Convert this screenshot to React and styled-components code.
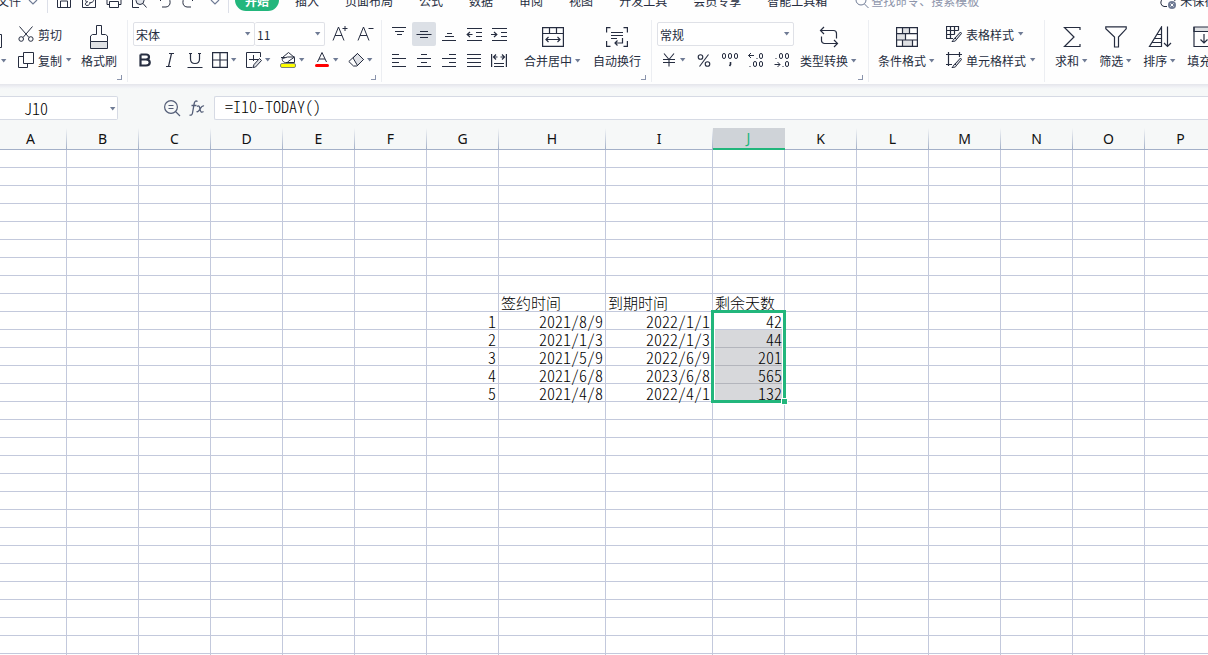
import React from "react";
import styled, { createGlobalStyle, css } from "styled-components";

const ink = "#262d40";
const muted = "#6f7b95";
const line = "#c3c9dc";
const headLine = "#a3b0c8";
const green = "#22b67c";
const uiFont = '"Noto Sans CJK SC", "Liberation Sans", sans-serif';

const Global = createGlobalStyle`
  *, *::before, *::after { box-sizing: border-box; }
  body { margin: 0; overflow: hidden; background: #fff; font-family: ${uiFont}; font-size: 12px; color: ${ink}; }
  button, input, select { font: inherit; color: inherit; margin: 0; }
`;

const Page = styled.div`
  display: flex;
  flex-direction: column;
  height: 100vh;
  overflow: hidden;
`;

const buttonReset = css`
  display: flex;
  align-items: center;
  flex-shrink: 0;
  border: 0;
  padding: 0;
  background: none;
  white-space: nowrap;
  cursor: pointer;
`;

/* Menu bar */
const MenuBar = styled.header`
  display: flex;
  align-items: center;
  flex-shrink: 0;
  height: 28px;
  margin-top: -14px;
  background: #fefefe;
`;
const FileButton = styled.button`
  ${buttonReset}
  gap: 7px;
  margin-left: -3px;
  padding-right: 9px;
`;
const Quick = styled.div`
  display: flex;
  align-items: center;
  gap: 9px;
  padding: 0 8px;
  border: solid #dcdfe8;
  border-width: 0 1px;
  height: 26px;
`;
const QuickButton = styled.button`
  ${buttonReset}
  padding-left: ${(p) => (p.$spaced ? 4 : 0)}px;
`;
const Tabs = styled.nav`
  display: flex;
  align-items: center;
  padding-left: 3px;
`;
const Tab = styled.button`
  ${buttonReset}
  height: 22px;
  padding: 0 13px;
  ${(p) => p.$active && css`
    padding: 0 10px;
    margin: 0 3px;
    border-radius: 11px;
    background: ${green};
    color: #fff;
    font-weight: 700;
  `}
`;
const Search = styled.label`
  display: flex;
  align-items: center;
  flex-shrink: 0;
  gap: 2px;
  margin-left: 15px;
  color: #7d86a0;
  input {
    width: 120px;
    border: 0;
    padding: 0;
    outline: 0;
    background: none;
  }
  input::placeholder { color: #8d94aa; opacity: 1; }
`;
const SaveState = styled.button`
  ${buttonReset}
  gap: 3px;
  margin-left: 168px;
`;

/* Ribbon */
const Ribbon = styled.section`
  display: flex;
  flex-shrink: 0;
  height: 70px;
  padding: 6px 0 2px;
  background: #fefefe;
`;
const Group = styled.div`
  position: relative;
  display: flex;
  align-items: flex-start;
  flex-shrink: 0;
  gap: ${(p) => p.$gap ?? 0}px;
  padding: 2px ${(p) => p.$right ?? 6}px 0 ${(p) => p.$left ?? 5}px;
  border-right: 1px solid #eceef2;
`;
const Launcher = styled.button`
  position: absolute;
  right: 5px;
  bottom: 2px;
  width: 5px;
  height: 5px;
  padding: 0;
  border: solid #8a94ac;
  border-width: 0 1px 1px 0;
  background: none;
`;
const Stack = styled.div`
  display: flex;
  flex-direction: column;
  gap: 2px;
  padding-right: ${(p) => p.$right ?? 0}px;
`;
const Row = styled.div`
  display: flex;
  align-items: center;
  height: 24px;
  gap: ${(p) => p.$gap ?? 0}px;
  padding-left: ${(p) => p.$left ?? 0}px;
  justify-content: ${(p) => (p.$spread ? "space-between" : "flex-start")};
`;
const IconButton = styled.button`
  ${buttonReset}
  justify-content: center;
  width: 24px;
  height: 24px;
  border-radius: 2px;
  background: ${(p) => (p.$on ? "#dce0e6" : "none")};
`;
const SplitButton = styled.button`
  ${buttonReset}
  gap: 2px;
  height: 24px;
  padding: 0 4px;
`;
const TextButton = styled.button`
  ${buttonReset}
  height: 24px;
  padding: 0 4px;
  gap: 3px;
  svg:first-child { margin-right: 1px; }
`;
const LargeButton = styled.button`
  ${buttonReset}
  flex-direction: column;
  padding: 0 4px;
`;
const LargeIcon = styled.span`
  display: flex;
  align-items: center;
  height: 30px;
`;
const LargeLabel = styled.span`
  display: flex;
  align-items: center;
  gap: 2px;
  height: 18px;
  line-height: 18px;
`;
const PasteButton = styled.button`
  ${buttonReset}
  flex-direction: column;
  align-items: flex-start;
  width: 13px;
`;
const SelectBox = styled.span`
  position: relative;
  display: flex;
  width: ${(p) => p.$width}px;
  height: 24px;
  border: 1px solid #dfe1e7;
  border-radius: 2px;
  background: #fff;
  & + & { border-left: 0; }
  select {
    appearance: none;
    width: 100%;
    border: 0;
    padding: 0 14px 0 2px;
    background: none;
    outline: 0;
  }
  svg {
    position: absolute;
    right: 3px;
    top: 8px;
    pointer-events: none;
  }
`;

/* Formula bar */
const FormulaBar = styled.section`
  display: flex;
  align-items: flex-start;
  flex-shrink: 0;
  height: 44px;
  padding-top: 12px;
  background: linear-gradient(#e4e5eb, #f0f1f5 3px, #f6f8f8 5px);
`;
const cellFont = css`
  font-family: "Noto Sans CJK SC", "Liberation Mono", monospace;
  font-feature-settings: "hwid";
  font-size: 16px;
  font-weight: 300;
  color: #000;
`;
const NameBox = styled.label`
  position: relative;
  flex-shrink: 0;
  width: 118px;
  height: 24px;
  border: 1px solid #d6dae4;
  border-left: 0;
  border-radius: 0 2px 2px 0;
  background: #fff;
  input {
    ${cellFont}
    width: 100px;
    height: 22px;
    padding: 0 0 0 24px;
    border: 0;
    outline: 0;
    background: none;
  }
  svg {
    position: absolute;
    right: 1px;
    top: 9px;
  }
`;
const FormulaTools = styled.div`
  display: flex;
  align-items: center;
  flex-shrink: 0;
  height: 24px;
  gap: 8px;
  padding: 0 9px 0 45px;
`;
const FormulaInput = styled.input`
  ${cellFont}
  flex: 1;
  min-width: 0;
  height: 24px;
  padding: 0 0 4px 10px;
  border: 1px solid #d6dae4;
  border-right: 0;
  border-radius: 2px 0 0 2px;
  outline: 0;
  background: #fff;
`;

/* Sheet */
const Sheet = styled.main`
  flex: 1;
  min-height: 0;
  overflow: hidden;
  background: #fff;
`;
const Grid = styled.table`
  table-layout: fixed;
  width: 0;
  margin-left: -5px;
  border-collapse: separate;
  border-spacing: 0;
`;
const Col = styled.col`
  width: ${(p) => (p.$wide ? 107 : 72)}px;
`;
const ColHead = styled.th`
  height: 22px;
  padding: 0 1px 0 0;
  border-bottom: 1px solid ${headLine};
  background: linear-gradient(transparent, ${headLine}) right / 1px 100% no-repeat, #f6f8f8;
  font: 400 14px/20px "Noto Sans", "Open Sans", sans-serif;
  color: #111;
  ${(p) => p.$active && css`
    border-bottom: 2px solid ${green};
    background: #cfd3d8;
    color: ${green};
  `}
`;
const Cell = styled.td`
  ${cellFont}
  position: relative;
  height: 18px;
  padding: 1px 2px 0;
  border: solid ${line};
  border-width: 0 1px 1px 0;
  line-height: 16px;
  text-align: right;
  white-space: nowrap;
  ${(p) => p.$title && css`
    font-size: 15px;
    text-align: left;
  `}
  ${(p) => p.$shaded && css`
    background: #d7d8db;
    border-bottom-color: #b3b5bc;
  `}
`;
const Selection = styled.span`
  position: absolute;
  z-index: 1;
  left: -2px;
  top: -2px;
  width: 75px;
  height: 93px;
  border: 3px solid ${green};
  box-shadow: inset 1px 1px #fff, inset -1px 0 #fff;
  pointer-events: none;
  &::after {
    content: "";
    position: absolute;
    right: -5px;
    bottom: -5px;
    width: 7px;
    height: 7px;
    border: 1px solid #fff;
    background: ${green};
  }
`;

/* Icons */
const Svg = ({ w = 16, h = 16, children, color = ink, sw = 1 }) => (
  <svg width={w} height={h} viewBox={`0 0 ${w} ${h}`} fill="none" stroke={color} strokeWidth={sw} aria-hidden="true">
    {children}
  </svg>
);
const Caret = () => (
  <svg width="7" height="6" viewBox="0 0 7 6" aria-hidden="true">
    <path d="M1 1h5.400L3.700 4.400z" fill={muted} />
  </svg>
);
const Chevron = () => <Svg w={10} h={12} color={muted} sw={1.2}><path d="M1 6l4 4 4-4" /></Svg>;
const Lines = ({ d, w = 16 }) => <Svg w={w} sw={1.2}><path d={d} /></Svg>;

const icons = {
  save: <Svg><path d="M1.500 1.500h10l3 3v11h-13zM4.500 15v-6h7v6M4.500 1.500v4h5v-4" /></Svg>,
  share: <Svg><path d="M5 3.500H1.500v12h13v-12H12M9 6.500c3-1 5 2 2.500 3.500L9 11M7 9.500c-3 1-3.500 4-1 4s3-2 3-3.500M9 6.500l-3 .500c-2 1-1.500 3 0 3" /></Svg>,
  print: <Svg><path d="M3.500 5V1.500h9V5M3.500 12.500h-2.500v-7h14v7h-2.500M3.500 9.500h9v6h-9z" /></Svg>,
  preview: <Svg><path d="M8 15.500H1.500v-14h12V5" /><circle cx="9" cy="8.500" r="4" fill="#e1e4ea" /><path d="M12 11.500l3.500 4" /></Svg>,
  undo: <Svg><path d="M5 2L1.500 5.500 5 9M2 5.500h8a4.800 4.800 0 0 1 0 9.500H6" /></Svg>,
  redo: <Svg><path d="M11 2l3.500 3.500L11 9M14 5.500H6A4.800 4.800 0 0 0 6 15h4" /></Svg>,
  search: <Svg w={14} h={16} color={muted}><circle cx="6" cy="8" r="5" /><path d="M9.500 12l4 4" /></Svg>,
  cloud: <Svg w={18} h={18}><path d="M8 15.500H5a4 4 0 0 1-1-7.500A5 5 0 0 1 14 7a4 4 0 0 1 2 3" /><circle cx="13" cy="14" r="4" fill={muted} stroke="none" /><path d="M11.500 12.500l3 3M14.500 12.500l-3 3" stroke="#fff" /></Svg>,
  cut: <Svg><path d="M1.500 0.500l9.500 11M14.500 0.500L5 11.500" /><circle cx="3.200" cy="13" r="2.300" /><circle cx="12.800" cy="13" r="2.300" /></Svg>,
  copy: <Svg><path d="M5.500 0.500h10v11h-10zM5 4.500H0.500v11h9v-4" /></Svg>,
  brush: <Svg w={20} h={26}><path d="M1.500 17.500h17v7h-17z" fill="#dfe1e4" /><path d="M1.500 17.500v-5.500l2-1.500h4v-9h5v9h4l2 1.500v5.500" /></Svg>,
  bold: <Svg sw={2.2}><path d="M3.500 2.500h5.500c4 0 4 5 0 5h-5.500M9 7.500c5 0 5 6 0 6H3.500v-11" /></Svg>,
  italic: <Svg sw={1.2}><path d="M7 1.500h5M4 14.500h5M9.500 1.500l-3 13" /></Svg>,
  underline: <Svg sw={1.2}><path d="M3.500 1v6c0 6 9 6 9 0V1M2 1.500h3M11 1.500h3M0.500 15.500h15" /></Svg>,
  borders: <Svg sw={1.2}><path d="M.6.600h14.800v14.800H.6zM8 .500v15M.5 8h15" /></Svg>,
  drawBorder: <Svg w={16}><path d="M14.500 5V.500H.5v15h6M7.500 3v6M3 7.500h9" /><path d="M8 12.500l5.500-6 2 2-6 6.500-2.500.500z" fill="#dfe1e6" /></Svg>,
  fill: <Svg><path d="M2.500 5.500l6-5 6 5v5h-9c-2 0-4-2-3-5z" /><path d="M2.500 6.500l5-1.500h7l-7 5M1 5.500h4" /><rect x="0.500" y="11.500" width="15" height="4" rx="1.500" fill="#ffff00" stroke="#7d8378" /></Svg>,
  fontColor: <Svg><path d="M3.500 10L8 .500l4.500 9.500M5 7h6" /><rect x="1" y="12" width="14" height="3" rx="1.500" fill="#ff0000" stroke="none" /></Svg>,
  eraser: <Svg w={16}><path d="M5 6l4.500-4.500 6 6-6 6z" fill="#dfe1e6" /><path d="M9.500 1.500l6 6-6.500 6.500H5.500L.8 9.500z" /></Svg>,
  bigger: <Svg w={18} h={18}><path d="M2 15.500L7.500 2l5.500 13.500M4 10.500h7M11.500 3.500h5M14 1v5" /></Svg>,
  smaller: <Svg w={18} h={18}><path d="M2 15.500L7.500 2l5.500 13.500M4 10.500h7M12.500 3.500h5" /></Svg>,
  top: <Lines d="M1 1.500h14M4 5.500h9M6 8.500h5" />,
  middle: <Lines d="M4 5.500h8M.5 8.500h15M4 11.500h8" />,
  bottom: <Lines d="M6 7.500h5M4 10.500h9M1 14.500h14" />,
  outdent: <Lines d="M1 2.500h15M10 6.500h6M10 10.500h6M1 14.500h15M6.500 8.500H1M4 6L1.200 8.500 4 11" />,
  indent: <Lines d="M1 2.500h15M10 6.500h6M10 10.500h6M1 14.500h15M0 8.500h6M3 6l2.800 2.500L3 11" />,
  left: <Lines d="M1 2.500h7M1 6.500h14M1 10.500h7M1 14.500h14" />,
  center: <Lines d="M5 2.500h6M1 6.500h14M5 10.500h6M1 14.500h14" />,
  right: <Lines d="M8 2.500h7M1 6.500h14M8 10.500h7M1 14.500h14" />,
  justify: <Lines d="M1 2.500h14M1 6.500h14M1 10.500h14M1 14.500h14" />,
  distribute: <Lines d="M.6 2v13M15.400 2v13M3 11.500h10M3 14.500h10M2 5h4.500M9.500 5H14M5 2.500L2.500 5 5 7.500M11 2.500L13.500 5 11 7.500" />,
  merge: <Svg w={22} h={20} sw={1.2}><path d="M.6.600h20.800v18.800H.6zM.6 6.500h20.800M7.500.600v6M14.500.600v6M4 12.500h14M6.500 10L4 12.500 6.500 15M15.500 10l2.500 2.500-2.500 2.500" /></Svg>,
  wrap: <Svg w={22} h={20} sw={1.2}><path d="M4.500.600H.6v5M17.500.600h3.900v5M.6 14v5.400h3.900M21.400 14v5.400h-3.900M5 5.500h12M5 8.500h12M5 11.500h6M16.500 11v5H9M11.500 13.500L9 16l2.500 2.500" /></Svg>,
  yen: <Svg sw={1.1}><path d="M3 1.500l5 6 5-6M8 7.500v7M2 7.500h12M2 10.500h12" /></Svg>,
  percent: <Svg sw={1.1}><circle cx="4.500" cy="5" r="2.300" /><circle cx="11.500" cy="12" r="2.300" /><path d="M12.500 2.500l-9 12" /></Svg>,
  thousands: <Svg w={18}><rect x="1.500" y="1.500" width="3" height="5" rx="1.500" /><rect x="7.500" y="1.500" width="3" height="5" rx="1.500" /><rect x="13.500" y="1.500" width="3" height="5" rx="1.500" /><path d="M9.500 10v2.500L8.500 14" strokeWidth="1.600" /></Svg>,
  moreDecimals: <Svg w={18}><path d="M7 3.500H1.500M4 1L1.500 3.500 4 6M10 6v1M3 14v1" /><rect x="12.500" y="1.500" width="3" height="5" rx="1.500" /><rect x="6.500" y="9.500" width="3" height="5" rx="1.500" /><rect x="12.500" y="9.500" width="3" height="5" rx="1.500" /></Svg>,
  lessDecimals: <Svg w={18}><path d="M1.500 12.500H7M4.500 10L7 12.500 4.500 15M3 6v1M10 14v1" /><rect x="6.500" y="1.500" width="3" height="5" rx="1.500" /><rect x="12.500" y="1.500" width="3" height="5" rx="1.500" /><rect x="12.500" y="9.500" width="3" height="5" rx="1.500" /></Svg>,
  convert: <Svg w={20} h={22} sw={1.2}><path d="M2 4.500h12.500a3 3 0 0 1 3 3v5M5 1L1.500 4.500 5 8M18 17.500H5.500a3 3 0 0 1-3-3v-4M15 14l3.500 3.500L15 21" /></Svg>,
  condition: <Svg w={22} h={20} sw={1.2}><path d="M7 1h6v5H7zM2 7h7v6H2zM7 13h9v6H7z" fill="#dfe1e4" stroke="none" /><path d="M.6.600h20.800v18.800H.6zM.6 6.600h20.800M.6 13h20.800M6.500.600v6M13.500.600v6M9.500 6.600V13M6.500 13v6.400M16.500 13v6.400" /></Svg>,
  tableStyle: <Svg w={16} h={17}><path d="M7 12.500H.5V.500h12v4M.5 4.500h12M.5 8.500h8M4.500.500v12M8.500.500v8" strokeWidth="1.200" /><path d="M14.500 6l1 1.500-5 6-1.500-1.500zM9 12l1.500 1.500c-1 2-2.500 2-4.500 2 1.500-1 1-2.500 3-3.500z" fill="#d5d8df" /></Svg>,
  cellStyle: <Svg w={16} h={17}><path d="M2.500 0v14M0 2.500h16M13.500 0v5M0 12.500h6" strokeWidth="1.200" /><path d="M14.500 6l1 1.500-5 6-1.500-1.500zM9 12l1.500 1.500c-1 2-2.500 2-4.500 2 1.500-1 1-2.500 3-3.500z" fill="#d5d8df" /></Svg>,
  sum: <Svg w={18} h={22} sw={1.2}><path d="M17 4V1.500H1.500L11 11 1.500 20.500H17V18" /></Svg>,
  filter: <Svg w={22} h={22} sw={1.2}><path d="M.8.800h20.400v2L13.500 11v10h-4V11L.8 2.800z" /></Svg>,
  sort: <Svg w={24} h={22} sw={1.2}><path d="M13.500 1v19.500H1.500zM9.500 8.500h4M6.500 12.500h7M4 16.500h9.500M19.500.500v20M16 17l3.500 3.500L23 17" /></Svg>,
  fillDown: <Svg w={22} h={22} sw={1.2}><path d="M1 1h20v4.500H1z" fill="#dfe1e4" /><path d="M1 1v19.500h20V1M11 8v9M7.500 13.500L11 17l3.500-3.500" /></Svg>,
  zoomOut: <Svg w={18} h={18} color="#535d77" sw={1.2}><circle cx="8" cy="8" r="6.400" /><path d="M12.500 12.500l4.500 4.500M5.500 6.500h5M5.500 9.500h5" /></Svg>,
  fx: <Svg w={16} h={18} color="#535d77" sw={1.3}><path d="M8.500 2.500c-2-1.500-3 .5-3.300 2L3.500 14c-.4 2-1.500 2.500-3 2M2.500 6.500h5M8 7.500c2-1.500 2.500 0 3 2.500.5 3 1.500 4 3.500 2.500M15 7c-2-.8-3 1.500-4 3s-2 3.500-3.500 2.500" /></Svg>,
};

const Large = ({ icon, label, menu }) => (
  <LargeButton type="button">
    <LargeIcon>{icons[icon]}</LargeIcon>
    <LargeLabel>{label}{menu && <Caret />}</LargeLabel>
  </LargeButton>
);
const Small = ({ icon, label, on }) => (
  <IconButton type="button" aria-label={label} $on={on}>{icons[icon]}</IconButton>
);
const Split = ({ icon, label }) => (
  <SplitButton type="button" aria-label={label}>{icons[icon]}<Caret /></SplitButton>
);
const Labelled = ({ icon, label, menu }) => (
  <TextButton type="button">{icons[icon]}{label}{menu && <Caret />}</TextButton>
);
const Dropdown = ({ label, width, options }) => (
  <SelectBox $width={width}>
    <select aria-label={label}>{options.map((o) => <option key={o}>{o}</option>)}</select>
    <Caret />
  </SelectBox>
);

const tabs = ["开始", "插入", "页面布局", "公式", "数据", "审阅", "视图", "开发工具", "会员专享", "智能工具箱"];
const quick = [["save", "保存"], ["share", "输出"], ["print", "打印"], ["preview", "打印预览"], ["undo", "撤销"], ["redo", "恢复"]];
const columns = "ABCDEFGHIJKLMNOP".split("");
const records = [
  ["2021/8/9", "2022/1/1", "42"],
  ["2021/1/3", "2022/1/3", "44"],
  ["2021/5/9", "2022/6/9", "201"],
  ["2021/6/8", "2023/6/8", "565"],
  ["2021/4/8", "2022/4/1", "132"],
];
const cells = { H9: "签约时间", I9: "到期时间", J9: "剩余天数" };
records.forEach(([signed, due, days], i) => {
  const r = 10 + i;
  cells[`G${r}`] = String(i + 1);
  cells[`H${r}`] = signed;
  cells[`I${r}`] = due;
  cells[`J${r}`] = days;
});
const rows = Array.from({ length: 60 }, (_, i) => i + 1);

export default function App() {
  return (
    <Page>
      <Global />
      <MenuBar>
        <FileButton type="button">文件<Chevron /></FileButton>
        <Quick>
          {quick.map(([icon, label]) => (
            <QuickButton key={icon} type="button" aria-label={label}>{icons[icon]}</QuickButton>
          ))}
          <QuickButton type="button" aria-label="自定义快速访问工具栏" $spaced><Chevron /></QuickButton>
        </Quick>
        <Tabs>
          {tabs.map((t, i) => <Tab key={t} type="button" $active={i === 0}>{t}</Tab>)}
        </Tabs>
        <Search>
          {icons.search}
          <input aria-label="搜索" placeholder="查找命令、搜索模板" />
        </Search>
        <SaveState type="button">{icons.cloud}未保存</SaveState>
      </MenuBar>

      <Ribbon>
        <Group $left={0} $gap={1}>
          <PasteButton type="button" aria-label="粘贴">
            <LargeIcon><Svg w={3} h={22}><path d="M0 8.500h1.500v13H0" /></Svg></LargeIcon>
            <LargeLabel><Caret /></LargeLabel>
          </PasteButton>
          <Stack>
            <Row><Labelled icon="cut" label="剪切" /></Row>
            <Row><Labelled icon="copy" label="复制" menu /></Row>
          </Stack>
          <Large icon="brush" label="格式刷" />
          <Launcher type="button" aria-label="剪贴板设置" />
        </Group>

        <Group $right={4}>
          <Stack>
            <Row>
              <Dropdown label="字体" width={122} options={["宋体", "黑体"]} />
              <Dropdown label="字号" width={70} options={["11", "12", "14"]} />
              <Row $gap={1} $left={3}>
                <Small icon="bigger" label="增大字号" />
                <Small icon="smaller" label="减小字号" />
              </Row>
            </Row>
            <Row $gap={1}>
              <Small icon="bold" label="加粗" />
              <Small icon="italic" label="倾斜" />
              <Small icon="underline" label="下划线" />
              <Split icon="borders" label="边框" />
              <Split icon="drawBorder" label="绘制边框" />
              <Split icon="fill" label="填充颜色" />
              <Split icon="fontColor" label="字体颜色" />
              <Split icon="eraser" label="清除" />
            </Row>
          </Stack>
          <Launcher type="button" aria-label="字体设置" />
        </Group>

        <Group $gap={4}>
          <Stack $right={5}>
            <Row $gap={1}>
              <Small icon="top" label="顶端对齐" />
              <Small icon="middle" label="垂直居中" on />
              <Small icon="bottom" label="底端对齐" />
              <Small icon="outdent" label="减少缩进量" />
              <Small icon="indent" label="增加缩进量" />
            </Row>
            <Row $gap={1}>
              <Small icon="left" label="左对齐" />
              <Small icon="center" label="水平居中" />
              <Small icon="right" label="右对齐" />
              <Small icon="justify" label="两端对齐" />
              <Small icon="distribute" label="分散对齐" />
            </Row>
          </Stack>
          <Large icon="merge" label="合并居中" menu />
          <Large icon="wrap" label="自动换行" />
          <Launcher type="button" aria-label="对齐设置" />
        </Group>

        <Group $gap={2} $right={7}>
          <Stack>
            <Row><Dropdown label="数字格式" width={137} options={["常规", "数值", "日期"]} /></Row>
            <Row $spread>
              <Split icon="yen" label="货币" />
              <Small icon="percent" label="百分比样式" />
              <Small icon="thousands" label="千位分隔样式" />
              <Small icon="moreDecimals" label="增加小数位数" />
              <Small icon="lessDecimals" label="减少小数位数" />
            </Row>
          </Stack>
          <Large icon="convert" label="类型转换" menu />
          <Launcher type="button" aria-label="数字设置" />
        </Group>

        <Group $gap={3} $right={4}>
          <Large icon="condition" label="条件格式" menu />
          <Stack>
            <Row><Labelled icon="tableStyle" label="表格样式" menu /></Row>
            <Row><Labelled icon="cellStyle" label="单元格样式" menu /></Row>
          </Stack>
        </Group>

        <Group $gap={3} $left={6}>
          <Large icon="sum" label="求和" menu />
          <Large icon="filter" label="筛选" menu />
          <Large icon="sort" label="排序" menu />
          <Large icon="fillDown" label="填充" menu />
        </Group>
      </Ribbon>

      <FormulaBar>
        <NameBox>
          <input aria-label="名称框" defaultValue="J10" />
          <Caret />
        </NameBox>
        <FormulaTools>
          <QuickButton type="button" aria-label="浏览公式">{icons.zoomOut}</QuickButton>
          <QuickButton type="button" aria-label="插入函数">{icons.fx}</QuickButton>
        </FormulaTools>
        <FormulaInput aria-label="编辑栏" defaultValue="=I10-TODAY()" />
      </FormulaBar>

      <Sheet>
        <Grid>
          <colgroup>
            {columns.map((c) => <Col key={c} $wide={c === "H" || c === "I"} />)}
          </colgroup>
          <thead>
            <tr>{columns.map((c) => <ColHead key={c} scope="col" $active={c === "J"}>{c}</ColHead>)}</tr>
          </thead>
          <tbody>
            {rows.map((r) => (
              <tr key={r}>
                {columns.map((c) => (
                  <Cell key={c} $title={r === 9} $shaded={c === "J" && r > 10 && r < 15}>
                    {cells[c + r]}
                    {c === "J" && r === 10 && <Selection />}
                  </Cell>
                ))}
              </tr>
            ))}
          </tbody>
        </Grid>
      </Sheet>
    </Page>
  );
}
